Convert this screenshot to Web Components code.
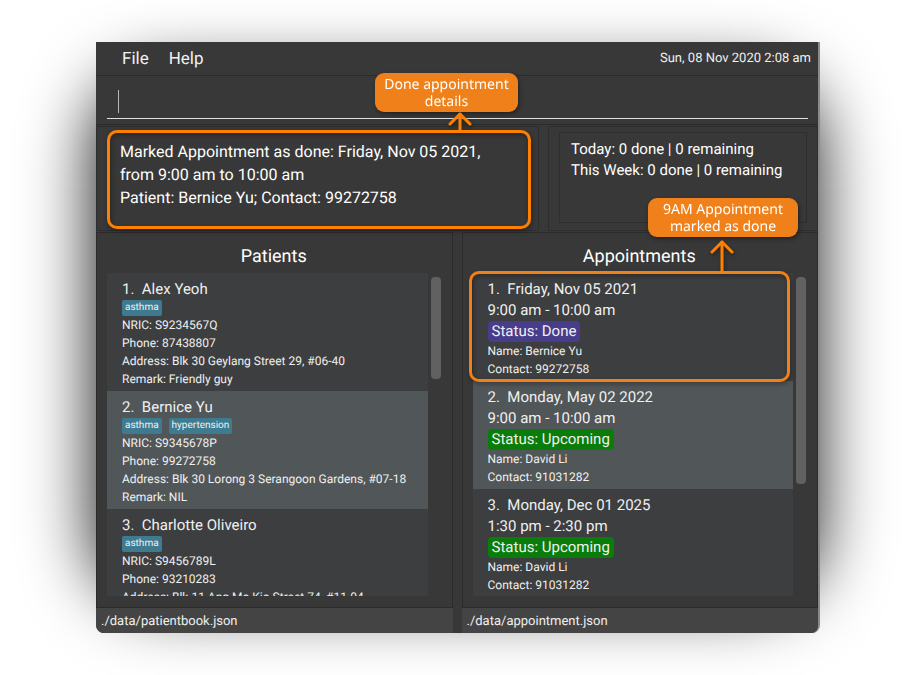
<!DOCTYPE html>
<html lang="en">
<head>
<meta charset="utf-8">
<title>Patient appointments</title>
<style>
*{box-sizing:border-box}
body{margin:0;background:#fff;color:#f0f0f0;font:15px/21px Roboto,"Liberation Sans",sans-serif;text-rendering:geometricPrecision}
</style>
</head>
<body>
<app-window>
  <menu-bar slot="menu"></menu-bar>
  <command-box slot="command"></command-box>
  <result-pane slot="result">
    Marked Appointment as done: Friday, Nov 05 2021, from 9:00 am to 10:00 am<br>Patient: Bernice Yu; Contact: 99272758
    <call-out slot="note" class="result">Done appointment details</call-out>
  </result-pane>
  <stats-pane slot="stats"></stats-pane>
  <list-pane slot="left" heading="Patients" class="short">
    <patient-card no="1" name="Alex Yeoh" tags="asthma" nric="S9234567Q" phone="87438807" address="Blk 30 Geylang Street 29, #06-40" remark="Friendly guy"></patient-card>
    <patient-card class="alt" no="2" name="Bernice Yu" tags="asthma,hypertension" nric="S9345678P" phone="99272758" address="Blk 30 Lorong 3 Serangoon Gardens, #07-18" remark="NIL"></patient-card>
    <patient-card no="3" name="Charlotte Oliveiro" tags="asthma" nric="S9456789L" phone="93210283" address="Blk 11 Ang Mo Kio Street 74, #11-04"></patient-card>
  </list-pane>
  <list-pane slot="right" heading="Appointments" class="long">
    <appointment-card no="1" date="Friday, Nov 05 2021" time="9:00 am - 10:00 am" status="Done" name="Bernice Yu" contact="99272758"></appointment-card>
    <appointment-card class="alt" no="2" date="Monday, May 02 2022" time="9:00 am - 10:00 am" status="Upcoming" name="David Li" contact="91031282"></appointment-card>
    <appointment-card no="3" date="Monday, Dec 01 2025" time="1:30 pm - 2:30 pm" status="Upcoming" name="David Li" contact="91031282"></appointment-card>
    <call-out slot="note" class="appointment">9AM Appointment marked as done</call-out>
  </list-pane>
  <span slot="file-left">./data/patientbook.json</span>
  <span slot="file-right">./data/appointment.json</span>
</app-window>
<script>
const define = (name, render) => customElements.define(name, class extends HTMLElement {
  connectedCallback() {
    if (this.shadowRoot) return;
    this.attachShadow({ mode: 'open' }).innerHTML = '<style>*{box-sizing:border-box}</style>' + render(this);
  }
});

define('app-window', () => `<style>
:host{display:flex;height:100vh;min-height:600px;padding:42px 98px 42px 96px;overflow:hidden}
main{position:relative;flex:1;display:flex;flex-direction:column;min-width:0}
main::before{content:"";position:absolute;z-index:-1;inset:38px 6px 36px 2px;border-radius:60px;background:#000;filter:blur(36px)}
.frame{flex:1;display:flex;flex-direction:column;min-height:0;background:#383838;border-radius:0 0 8px 8px;border-right:2px solid #8a8a8a}
.top{display:grid;grid-template-columns:minmax(0,443fr) minmax(0,270fr);gap:9px;height:107px;border-top:1px solid #2b2b2b}
.lists,.foot{display:grid;grid-template-columns:minmax(0,1fr) minmax(0,1fr);gap:9px}
.lists{flex:1;min-height:0}
.foot{line-height:23px;font-size:13px}
.foot div{background:#444;padding:2px 5px 0}
.foot div:first-child{border-radius:0 0 0 8px}
.foot div:last-child{border-radius:0 0 8px 0}
</style>
<main><div class="frame">
<slot name="menu"></slot><slot name="command"></slot>
<div class="top"><slot name="result"></slot><slot name="stats"></slot></div>
<div class="lists"><slot name="left"></slot><slot name="right"></slot></div>
<footer class="foot"><div><slot name="file-left"></slot></div><div><slot name="file-right"></slot></div></footer>
</div></main>`);

define('menu-bar', () => `<style>
:host{display:flex;align-items:center;gap:20px;height:34px;padding:0 7px 0 26px;border-bottom:1px solid #2b2b2b}
button{all:unset;font-size:17px;line-height:24px}
time{margin-left:auto;font-size:13px}
</style><button type="button">File</button><button type="button">Help</button><time datetime="2020-11-08T02:08">Sun, 08 Nov 2020 2:08 am</time>`);

define('command-box', () => `<style>
:host{display:block;height:48px;padding:8px 10px 5px 11px}
div{display:flex;align-items:center;height:35px;border-bottom:1px solid #e0e0e0;padding:0 11px}
i{width:1px;height:23px;background:#b8b8b8}
input{flex:1;min-width:0;border:0;outline:0;background:none;color:inherit;font:inherit;padding:0}
</style><div><i></i><input type="text" aria-label="Command"></div>`);

define('result-pane', () => `<style>
:host{position:relative;display:block;border:1px solid #2e2e2e;margin-top:1px;padding:13px 23px;line-height:23px;font-size:16px;color:#fff}
</style><slot></slot><slot name="note"></slot>`);

define('stats-pane', () => `<style>
:host{display:block;border:1px solid #2e2e2e;margin-top:1px;padding:5px 10px 7px;color:#fff}
div{height:100%;border:1px solid #2e2e2e;padding:6px 11px}
p{margin:0}
</style><div><p>Today: 0 done | 0 remaining</p><p>This Week: 0 done | 0 remaining</p></div>`);

define('list-pane', el => `<style>
:host{position:relative;display:flex;flex-direction:column;min-height:0;border:1px solid #2b2b2b;margin-top:1px;padding:11px 11px 11px 10px}
h2{margin:0 0 3px;font-size:18px;line-height:26px;font-weight:400;text-align:center;color:#fff}
.body{display:flex;gap:3px;flex:1;min-height:0}
.view{flex:1;min-width:0;overflow:hidden;background:#3c3e3f}
.bar{width:10px;padding-top:4px}
.thumb{height:32%;background:#616161;border-radius:4px}
:host(.long) .thumb{height:65%}
</style><h2>${el.getAttribute('heading')}</h2>
<div class="body"><div class="view"><slot></slot></div><div class="bar"><div class="thumb"></div></div></div><slot name="note"></slot>`);

const card = `<style>
:host{display:block;padding:6px 15px 3px;background:#3c3e3f}
:host(.alt){background:#515658}
h3{margin:0;font-size:15px;line-height:21px;font-weight:400;white-space:pre}
p{margin:0;font-size:12px;line-height:18px;white-space:nowrap}
</style>`;

define('patient-card', el => { const a = n => el.getAttribute(n); return card + `<style>
.tags{display:flex;gap:7px}
.tags span{background:#3e7b91;border-radius:2px;padding:0 3px;font-size:10px;line-height:16px}
</style><h3>${a('no')}.  ${a('name')}</h3>
<div class="tags">${a('tags').split(',').map(t => `<span>${t}</span>`).join('')}</div>
<p>NRIC: ${a('nric')}</p><p>Phone: ${a('phone')}</p><p>Address: ${a('address')}</p>${a('remark') ? `<p>Remark: ${a('remark')}</p>` : ''}`; });

define('appointment-card', el => { const a = n => el.getAttribute(n); return card + `<style>
.big{font-size:15px;line-height:21px}
.status{width:fit-content;background:#0a7c0a;border-radius:4px;padding:0 4px}
.Done{background:#483d8b}
</style><h3>${a('no')}.  ${a('date')}</h3><p class="big">${a('time')}</p>
<p class="big status ${a('status')}">Status: ${a('status')}</p>
<p>Name: ${a('name')}</p><p>Contact: ${a('contact')}</p>`; });

define('call-out', () => `<style>
:host{position:absolute;z-index:2;border:3px solid #ff8000;border-radius:10px;filter:drop-shadow(1px 2px 2px #0006);pointer-events:none}
:host(.result){inset:3px 7px 1px 10px;--label:143px;--right:10px;--up:21px;--line:21px;--tip:56px}
:host(.appointment){top:38px;left:6px;right:27px;height:111px;border-color:#f08019;--label:150px;--right:-11px;--up:37px;--line:34px;--tip:53px}
svg{position:absolute;right:var(--tip);bottom:100%;width:24px;height:var(--line)}
path,line{fill:none;stroke:#ff8000;stroke-width:3;stroke-linecap:round;stroke-linejoin:round}
.label{position:absolute;right:var(--right);bottom:calc(100% + var(--up));width:var(--label);padding:3px 4px 2px;border-radius:9px;background:#f08019;color:#fff;font:14px/17px "Noto Sans",sans-serif;text-align:center}
</style><svg aria-hidden="true"><path d="M2 12 L12 2 L22 12"/><line x1="12" y1="2" x2="12" y2="100%"/></svg><div class="label"><slot></slot></div>`);
</script>
</body>
</html>
